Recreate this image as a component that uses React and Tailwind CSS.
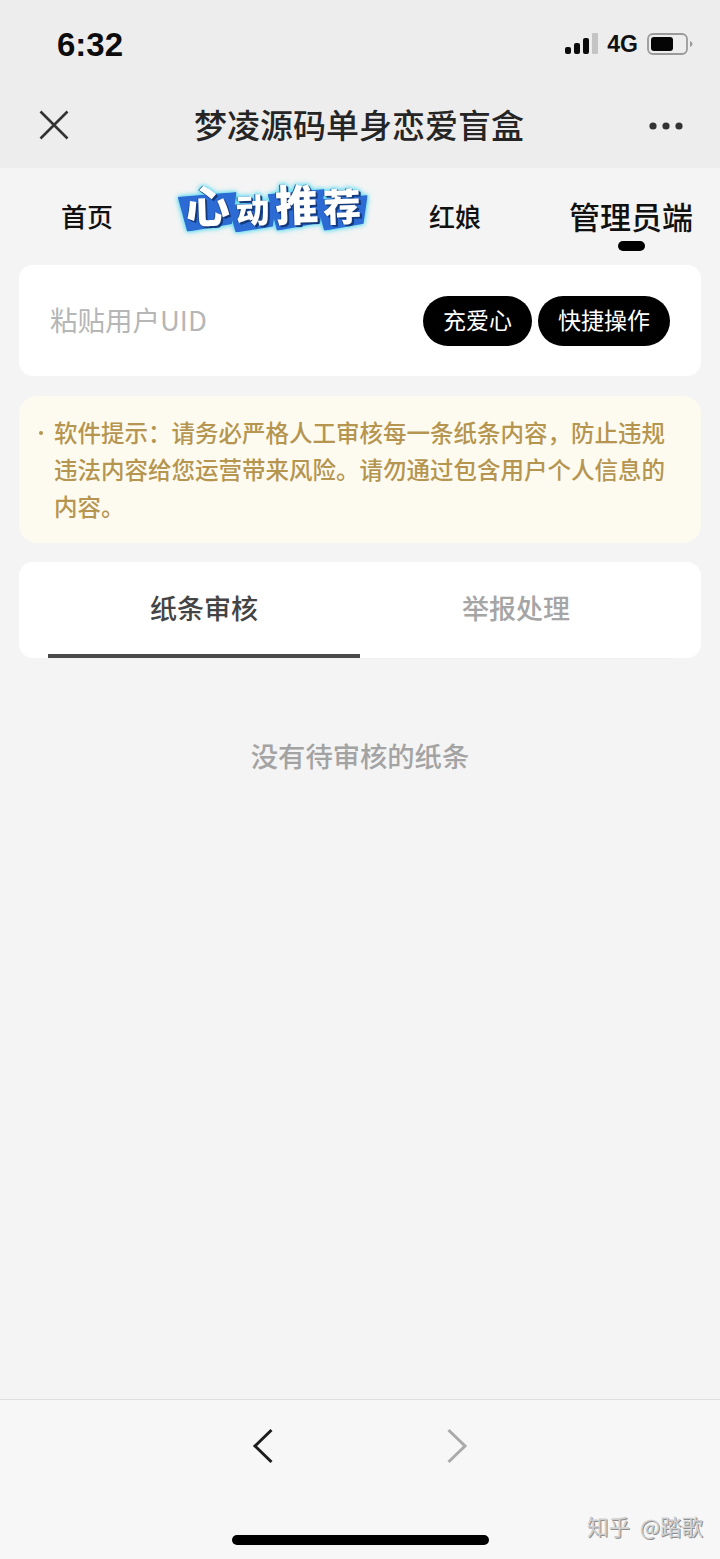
const cjk = "font-['Noto_Sans_CJK_SC','Noto_Sans',sans-serif]";

// 心动推荐 sticker: blue slanted blocks behind white outlined text
const logoChars = [
  { ch: '心', w: 45, h: 38, top: 9, size: 44 },
  { ch: '动', w: 35, h: 30, top: 18, size: 34 },
  { ch: '推', w: 43, h: 40, top: 6, size: 43 },
  { ch: '荐', w: 38, h: 34, top: 12, size: 38 },
];

const Logo = () => (
  <div className="flex h-[60px] w-[190px] items-start gap-[5px] pl-[7px] [filter:drop-shadow(0_0_2px_#5fd8ee)_drop-shadow(0_0_2px_#7fe4f2)]">
    {logoChars.map((c) => (
      <span key={c.ch} className="relative flex -rotate-2 items-center justify-center" style={{ width: c.w, height: c.h, marginTop: c.top }}>
        <span className="absolute inset-x-[-7px] top-[8px] bottom-[-8px] bg-[#2d6bd4] [clip-path:polygon(0_8%,100%_0,90%_84%,14%_100%)]" />
        <span className="relative font-black leading-none text-white [text-shadow:1px_1px_0_#153a7c,2px_2px_0_#153a7c,-1px_0_0_#1d4f9f]" style={{ fontSize: c.size }}>
          {c.ch}
        </span>
      </span>
    ))}
  </div>
);

export default function App() {
  return (
    <div className={`${cjk} flex h-[1559px] w-[720px] flex-col overflow-hidden bg-[#f4f4f4]`}>
      {/* status bar + wechat title bar */}
      <div className="h-[168px] shrink-0 bg-[#ededed]">
        <div className="flex h-[86px] items-center justify-between pl-[57px] pr-[27px] pt-[2px]">
          <span className="font-['Liberation_Sans',sans-serif] text-[33px] font-bold leading-none text-[#0c0c0c]">6:32</span>
          <div className="flex items-center">
            <svg width="34" height="22" viewBox="0 0 34 22" className="mr-[8px]">
              <rect x="0" y="14" width="6" height="7" rx="2" fill="#0c0c0c" />
              <rect x="9" y="10" width="6" height="11" rx="2" fill="#0c0c0c" />
              <rect x="18" y="5" width="6" height="16" rx="2" fill="#0c0c0c" />
              <rect x="27" y="0" width="6" height="21" rx="1" fill="#c4c4c4" />
            </svg>
            <span className="mr-[9px] font-['Liberation_Sans',sans-serif] text-[23px] font-bold leading-none text-[#111]">4G</span>
            <svg width="46" height="24" viewBox="0 0 46 24">
              <rect x="1" y="2" width="39" height="20" rx="5" fill="none" stroke="#9a9a9a" strokeWidth="1.8" />
              <rect x="4" y="5" width="22" height="14" rx="3" fill="#050505" />
              <path d="M43 9 C45 10 45.5 11 45.5 12 C45.5 13 45 14 43 15 Z" fill="#9a9a9a" />
            </svg>
          </div>
        </div>
        <div className="flex h-[82px] items-center justify-between pb-[5px] pl-[38px] pr-[36px]">
          <svg width="32" height="32" viewBox="0 0 32 32">
            <path d="M2.5 2.5 L29.5 29.5 M29.5 2.5 L2.5 29.5" stroke="#333" strokeWidth="2.6" fill="none" />
          </svg>
          <span className="text-[33px] font-medium leading-none text-[#252525]">梦凌源码单身恋爱盲盒</span>
          <svg width="36" height="10" viewBox="0 0 36 10" className="mt-[2px]">
            <circle cx="5" cy="5" r="3.6" fill="#333" />
            <circle cx="18" cy="5" r="3.6" fill="#333" />
            <circle cx="31" cy="5" r="3.6" fill="#333" />
          </svg>
        </div>
      </div>

      {/* top tabs */}
      <div className="flex h-[97px] shrink-0 items-start bg-[#f4f4f4] pl-[61px] pr-[27px] pt-[32px] text-[#111]">
        <span className="text-[26px] font-medium leading-[32px]">首页</span>
        <div className="ml-[65px] mt-[-24px]">
          <Logo />
        </div>
        <span className="ml-[61px] text-[26px] font-medium leading-[32px]">红娘</span>
        <div className="relative ml-auto">
          <span className="text-[31px] font-medium leading-[32px]">管理员端</span>
          <span className="absolute left-[49px] top-[41px] h-[10px] w-[27px] rounded-full bg-black" />
        </div>
      </div>

      <div className="flex flex-col px-[19px]">
        {/* uid input */}
        <div className="flex h-[111px] items-center justify-between rounded-[14px] bg-white px-[31px]">
          <span className="pb-[2px] text-[27.5px] leading-none text-[#b6b6b6]">粘贴用户UID</span>
          <div className="flex gap-[6px]">
            <span className="flex h-[50px] w-[109px] items-center justify-center rounded-full bg-black pb-[3px] text-[23px] text-white">充爱心</span>
            <span className="flex h-[50px] w-[132px] items-center justify-center rounded-full bg-black pb-[3px] text-[23px] text-white">快捷操作</span>
          </div>
        </div>

        {/* notice */}
        <div className="relative mt-[20px] h-[147px] rounded-[18px] bg-[#fdfbf0] pl-[35px] pr-[30px] pt-[18px]">
          <span className="absolute left-[20px] top-[35px] h-[4px] w-[4px] rounded-full bg-[#b5954f]" />
          <p className="w-[620px] text-[23.5px] font-medium leading-[37px] text-[#b5954f]">
            软件提示：请务必严格人工审核每一条纸条内容，防止违规违法内容给您运营带来风险。请勿通过包含用户个人信息的内容。
          </p>
        </div>

        {/* review tabs */}
        <div className="mt-[19px] h-[96px] rounded-[14px] bg-white px-[29px]">
          <div className="flex h-[97px] border-b-[1px] border-[#f0f0f0]">
            <div className="flex w-[312px] justify-center border-b-[4px] border-[#4a4a4a] pt-[28px] text-[27px] font-medium leading-[36px] text-[#444]">纸条审核</div>
            <div className="flex w-[312px] justify-center pt-[28px] text-[27px] font-medium leading-[36px] text-[#a5a5a5]">举报处理</div>
          </div>
        </div>
      </div>

      <div className="mt-[79px] text-center text-[27.3px] font-medium leading-[36px] text-[#a3a3a3]">没有待审核的纸条</div>

      {/* bottom bar */}
      <div className="relative mt-auto h-[160px] shrink-0 border-t border-[#dedede] bg-[#f7f7f7]">
        <div className="flex justify-center gap-[172px] pt-[28px]">
          <svg width="22" height="36" viewBox="0 0 22 36">
            <path d="M19.5 2 L3 18 L19.5 34" stroke="#1c1c1c" strokeWidth="3" fill="none" />
          </svg>
          <svg width="22" height="36" viewBox="0 0 22 36">
            <path d="M2.5 2 L19 18 L2.5 34" stroke="#aaaaaa" strokeWidth="3" fill="none" />
          </svg>
        </div>
        <span className="absolute right-[17px] top-[115px] whitespace-pre text-[21.5px] leading-none text-[#cfcfcf] [text-shadow:1px_1px_0_#8f8f8f]">知乎  @踏歌</span>
        <div className="absolute bottom-[14px] left-[232px] h-[10px] w-[257px] rounded-full bg-black" />
      </div>
    </div>
  );
}
